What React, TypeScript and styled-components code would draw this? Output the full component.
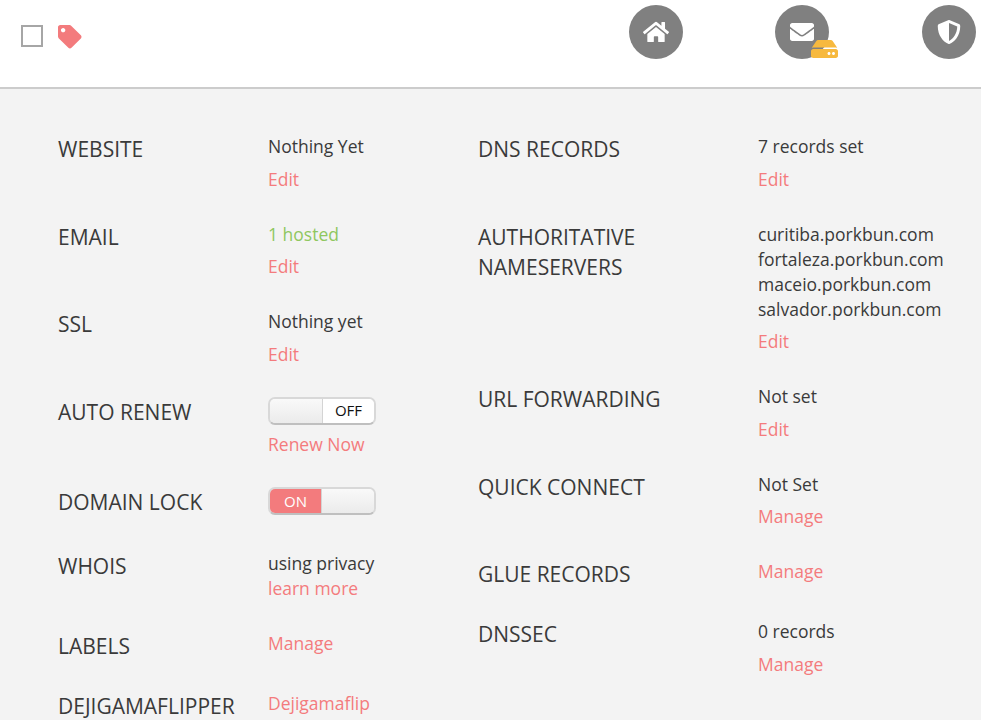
import React from "react";
import styled, { createGlobalStyle } from "styled-components";
import { FaHome, FaEnvelope, FaHdd, FaShieldAlt, FaTag } from "react-icons/fa";

const Global = createGlobalStyle`
  html, body { margin: 0; padding: 0; background: #f3f3f3; overflow: hidden; }
  body { font-family: "Open Sans", "Liberation Sans", sans-serif; color: #3a3a3a; }
`;

const Header = styled.header`
  height: 87px;
  background: #fff;
  border-bottom: 2px solid #ccc;
  display: flex;
  align-items: flex-start;
`;
const Tools = styled.div`
  display: flex;
  align-items: flex-start;
  gap: 15px;
  padding: 25px 0 0 21px;
`;
const Check = styled.span`
  display: block;
  box-sizing: border-box;
  width: 22px;
  height: 22px;
  border: 2px solid #a6a6a6;
`;
const TagIcon = styled(FaTag)`
  width: 23.5px;
  height: 23.5px;
  color: #f37b7d;
`;
const Nav = styled.nav`
  margin-left: auto;
  display: flex;
  gap: 92.6px;
  padding: 5px 5px 0 0;
`;
const Circle = styled.div`
  position: relative;
  width: 54px;
  height: 54px;
  border-radius: 50%;
  background: #808080;
  color: #fff;
  display: flex;
  align-items: center;
  justify-content: center;
  font-size: 24px;
`;
const HomeIcon = styled(FaHome)`
  width: 26px;
  height: 26px;
`;
const Badge = styled(FaHdd)`
  position: absolute;
  left: 36px;
  top: 32px;
  width: 27px;
  height: 24px;
  color: #f7b93e;
`;
const Columns = styled.main`
  display: grid;
  grid-template-columns: 420px 1fr;
  padding: 45px 0 0 58px;
`;
const Column = styled.section<{ $labelWidth: number }>`
  display: grid;
  grid-template-columns: ${(p) => p.$labelWidth}px 1fr;
  row-gap: 30px;
  align-content: start;
`;
const Label = styled.div`
  font-size: 21px;
  line-height: 30px;
  color: #3a3a3a;
  white-space: pre-line;
`;
const Value = styled.div`
  font-size: 17.5px;
  line-height: 25px;
  color: #3a3a3a;
  white-space: nowrap;
`;
const Text = styled.div<{ $ok?: boolean }>`
  color: ${(p) => (p.$ok ? "#8fc75f" : "#3a3a3a")};
`;
const Action = styled.a<{ $tight?: boolean }>`
  display: block;
  margin-top: ${(p) => (p.$tight ? 0 : 7.5)}px;
  color: #f37b7d;
  &:first-child { margin-top: 0; }
`;
const Switch = styled.div<{ $spaced?: boolean }>`
  box-sizing: border-box;
  width: 108px;
  height: 28px;
  border: 2px solid #d8d8d8;
  border-bottom-color: #bfbfbf;
  border-radius: 7px;
  display: flex;
  overflow: hidden;
  margin-bottom: ${(p) => (p.$spaced ? 6 : 0)}px;
`;
const Knob = styled.div<{ $side: "left" | "right" }>`
  flex: 0 0 53px;
  box-sizing: border-box;
  background: linear-gradient(#f9f9f9, #ebebeb);
  border-${(p) => p.$side}: 1px solid #d4d4d4;
`;
const State = styled.div<{ $on?: boolean }>`
  flex: 1;
  display: flex;
  align-items: center;
  justify-content: center;
  font-size: 15px;
  background: ${(p) => (p.$on ? "#f37b7d" : "#fff")};
  color: ${(p) => (p.$on ? "#fff" : "#111")};
`;

const App = () => (
  <>
    <Global />
    <Header>
      <Tools>
        <Check />
        <TagIcon />
      </Tools>
      <Nav>
        <Circle><HomeIcon /></Circle>
        <Circle><FaEnvelope /><Badge /></Circle>
        <Circle><FaShieldAlt /></Circle>
      </Nav>
    </Header>
    <Columns>
      <Column $labelWidth={210}>
        <Label>WEBSITE</Label>
        <Value><Text>Nothing Yet</Text><Action>Edit</Action></Value>
        <Label>EMAIL</Label>
        <Value><Text $ok>1 hosted</Text><Action>Edit</Action></Value>
        <Label>SSL</Label>
        <Value><Text>Nothing yet</Text><Action>Edit</Action></Value>
        <Label>AUTO RENEW</Label>
        <Value>
          <Switch><Knob $side="right" /><State>OFF</State></Switch>
          <Action>Renew Now</Action>
        </Value>
        <Label>DOMAIN LOCK</Label>
        <Value>
          <Switch $spaced><State $on>ON</State><Knob $side="left" /></Switch>
        </Value>
        <Label>WHOIS</Label>
        <Value><Text>using privacy</Text><Action $tight>learn more</Action></Value>
        <Label>LABELS</Label>
        <Value><Action>Manage</Action></Value>
        <Label>DEJIGAMAFLIPPER</Label>
        <Value><Action>Dejigamaflip</Action></Value>
      </Column>
      <Column $labelWidth={280}>
        <Label>DNS RECORDS</Label>
        <Value><Text>7 records set</Text><Action>Edit</Action></Value>
        <Label>{"AUTHORITATIVE\nNAMESERVERS"}</Label>
        <Value>
          <Text>curitiba.porkbun.com</Text>
          <Text>fortaleza.porkbun.com</Text>
          <Text>maceio.porkbun.com</Text>
          <Text>salvador.porkbun.com</Text>
          <Action>Edit</Action>
        </Value>
        <Label>URL FORWARDING</Label>
        <Value><Text>Not set</Text><Action>Edit</Action></Value>
        <Label>QUICK CONNECT</Label>
        <Value><Text>Not Set</Text><Action>Manage</Action></Value>
        <Label>GLUE RECORDS</Label>
        <Value><Action>Manage</Action></Value>
        <Label>DNSSEC</Label>
        <Value><Text>0 records</Text><Action>Manage</Action></Value>
      </Column>
    </Columns>
  </>
);

export default App;
